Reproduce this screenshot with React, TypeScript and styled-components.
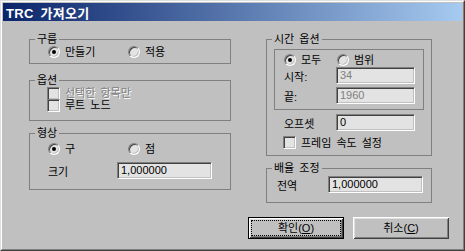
import React from "react";
import styled, { createGlobalStyle } from "styled-components";

const Global = createGlobalStyle`
  html, body { margin: 0; padding: 0; background: #c0c0c0; }
  body {
    font-family: "Liberation Sans", "Noto Sans CJK KR", sans-serif;
    font-size: 11px;
    color: #000;
    word-spacing: 2px;
  }
`;

const Window = styled.div`
  width: 465px;
  height: 251px;
  box-sizing: border-box;
  border: 1px solid;
  border-color: #dfdfdf #404040 #404040 #dfdfdf;
  background: #c0c0c0;
`;

const Frame = styled.div`
  height: 100%;
  box-sizing: border-box;
  border: 1px solid;
  border-color: #fff #808080 #808080 #fff;
  padding: 1px;
  display: flex;
  flex-direction: column;
`;

const TitleBar = styled.div`
  height: 18px;
  flex: none;
  background: linear-gradient(to right, #0a246a, #a6caf0);
  color: #fff;
  font-weight: bold;
  font-size: 13px;
  word-spacing: 3px;
  letter-spacing: 0.3px;
  display: flex;
  align-items: center;
  padding-left: 3px;
`;

const Body = styled.div`
  flex: 1;
  display: flex;
`;

const Column = styled.div<{ $ml: number; $w: number }>`
  margin-left: ${(p) => p.$ml}px;
  width: ${(p) => p.$w}px;
  padding-top: 18px;
  display: flex;
  flex-direction: column;
`;

const Group = styled.div<{ $mt?: number; $ml?: number; $w: number; $pb: number }>`
  display: flex;
  flex-direction: column;
  box-sizing: border-box;
  border: 1px solid #808080;
  margin-top: ${(p) => p.$mt ?? 0}px;
  margin-left: ${(p) => p.$ml ?? 0}px;
  width: ${(p) => p.$w}px;
  padding-bottom: ${(p) => p.$pb}px;
`;

const Caption = styled.div`
  align-self: flex-start;
  margin: -7px 0 0 5px;
  padding: 0 2px;
  background: #c0c0c0;
  height: 13px;
  line-height: 13px;
  white-space: nowrap;
`;

const InnerFrame = styled.div`
  display: flex;
  flex-direction: column;
  border: 1px solid #808080;
  margin: 3px 7px 0;
  padding: 4px 0 5px 9px;
`;

const RadioRow = styled.div<{ $col: number; $pl: number; $mt?: number }>`
  display: grid;
  grid-template-columns: ${(p) => p.$col}px auto;
  padding-left: ${(p) => p.$pl}px;
  margin-top: ${(p) => p.$mt ?? 0}px;
  height: 12px;
  align-items: center;
`;

const Choice = styled.label<{ $disabled?: boolean }>`
  display: flex;
  align-items: center;
  gap: 5px;
  line-height: 12px;
  height: 12px;
  white-space: nowrap;
  color: ${(p) => (p.$disabled ? "#808080" : "#000")};
  text-shadow: ${(p) => (p.$disabled ? "1px 1px 0 #fff" : "none")};
`;

const RadioCircle = styled.span<{ $on?: boolean }>`
  flex: none;
  width: 12px;
  height: 12px;
  box-sizing: border-box;
  border-radius: 50%;
  border: 1px solid;
  border-color: #808080 #fff #fff #808080;
  background: #e3e3e3;
  box-shadow: inset 1px 1px 0 #404040, inset -1px -1px 0 #c0c0c0;
  display: flex;
  align-items: center;
  justify-content: center;
  &::after {
    content: "";
    width: 4px;
    height: 4px;
    border-radius: 50%;
    background: ${(p) => (p.$on ? "#000" : "transparent")};
  }
`;

const CheckBox = styled.span`
  flex: none;
  width: 13px;
  height: 13px;
  box-sizing: border-box;
  border: 1px solid;
  border-color: #808080 #fff #fff #808080;
  background: #e3e3e3;
  box-shadow: inset 1px 1px 0 #404040, inset -1px -1px 0 #c0c0c0;
`;

const CheckRow = styled.div<{ $pl: number; $mt?: number; $h?: number }>`
  display: flex;
  align-items: center;
  padding-left: ${(p) => p.$pl}px;
  margin-top: ${(p) => p.$mt ?? 0}px;
  height: ${(p) => p.$h ?? 12}px;
`;

const FieldRow = styled.div<{ $pl: number; $mt?: number }>`
  display: flex;
  align-items: center;
  padding-left: ${(p) => p.$pl}px;
  margin-top: ${(p) => p.$mt ?? 0}px;
`;

const FieldLabel = styled.span<{ $w: number }>`
  width: ${(p) => p.$w}px;
  flex: none;
  white-space: nowrap;
`;

const Edit = styled.div<{ $w: number; $disabled?: boolean }>`
  width: ${(p) => p.$w}px;
  height: 17px;
  box-sizing: border-box;
  border: 1px solid;
  border-color: #808080 #fff #fff #808080;
  box-shadow: inset 1px 1px 0 #404040, inset -1px -1px 0 #c0c0c0;
  background: #e3e3e3;
  color: ${(p) => (p.$disabled ? "#808080" : "#000")};
  padding-left: 3px;
  line-height: 15px;
  font-size: 11px;
`;

const ButtonRow = styled.div`
  display: flex;
  gap: 9px;
  margin-top: 14px;
`;

const Button = styled.button<{ $default?: boolean }>`
  width: 96px;
  height: 22px;
  box-sizing: border-box;
  padding: 0;
  margin: 0;
  font: inherit;
  font-size: 11px;
  color: #000;
  background: #c0c0c0;
  border: ${(p) => (p.$default ? "1px solid #000" : "none")};
  box-shadow: inset 1px 1px 0 #fff, inset -1px -1px 0 #404040,
    inset 2px 2px 0 #dfdfdf, inset -2px -2px 0 #808080;
  outline: ${(p) => (p.$default ? "1px dotted #000" : "none")};
  outline-offset: -4px;
  line-height: 20px;
`;

const Radio = ({ on, children }: { on?: boolean; children: React.ReactNode }) => (
  <Choice>
    <RadioCircle $on={on} />
    {children}
  </Choice>
);

export default function App() {
  return (
    <>
      <Global />
      <Window>
        <Frame>
          <TitleBar>TRC 가져오기</TitleBar>
          <Body>
            <Column $ml={26} $w={202}>
              <Group $w={202} $pb={5}>
                <Caption>구름</Caption>
                <RadioRow $col={80} $pl={18}>
                  <Radio on>만들기</Radio>
                  <Radio>적용</Radio>
                </RadioRow>
              </Group>
              <Group $w={202} $pb={9} $mt={16}>
                <Caption>옵션</Caption>
                <CheckRow $pl={17}>
                  <Choice $disabled>
                    <CheckBox />
                    선택한 항목만
                  </Choice>
                </CheckRow>
                <CheckRow $pl={17}>
                  <Choice>
                    <CheckBox />
                    루트 노드
                  </Choice>
                </CheckRow>
              </Group>
              <Group $w={202} $pb={10} $mt={12}>
                <Caption>형상</Caption>
                <RadioRow $col={80} $pl={18} $mt={3}>
                  <Radio on>구</Radio>
                  <Radio>점</Radio>
                </RadioRow>
                <FieldRow $pl={18} $mt={7}>
                  <FieldLabel $w={69}>크기</FieldLabel>
                  <Edit $w={95}>1,000000</Edit>
                </FieldRow>
              </Group>
            </Column>
            <Column $ml={17} $w={201}>
              <Group $w={166} $ml={18} $pb={6}>
                <Caption>시간 옵션</Caption>
                <InnerFrame>
                  <RadioRow $col={53} $pl={0}>
                    <Radio on>모두</Radio>
                    <Radio>범위</Radio>
                  </RadioRow>
                  <FieldRow $pl={0} $mt={1}>
                    <FieldLabel $w={52}>시작:</FieldLabel>
                    <Edit $w={79} $disabled>
                      34
                    </Edit>
                  </FieldRow>
                  <FieldRow $pl={0} $mt={3}>
                    <FieldLabel $w={52}>끝:</FieldLabel>
                    <Edit $w={79} $disabled>
                      1960
                    </Edit>
                  </FieldRow>
                </InnerFrame>
                <FieldRow $pl={17} $mt={4}>
                  <FieldLabel $w={52}>오프셋</FieldLabel>
                  <Edit $w={79}>0</Edit>
                </FieldRow>
                <CheckRow $pl={16} $mt={5} $h={13}>
                  <Choice>
                    <CheckBox />
                    프레임 속도 설정
                  </Choice>
                </CheckRow>
              </Group>
              <Group $w={166} $ml={18} $pb={9} $mt={12}>
                <Caption>배율 조정</Caption>
                <FieldRow $pl={10} $mt={1}>
                  <FieldLabel $w={51}>전역</FieldLabel>
                  <Edit $w={95}>1,000000</Edit>
                </FieldRow>
              </Group>
              <ButtonRow>
                <Button $default>
                  확인(<u>O</u>)
                </Button>
                <Button>
                  취소(<u>C</u>)
                </Button>
              </ButtonRow>
            </Column>
          </Body>
        </Frame>
      </Window>
    </>
  );
}
